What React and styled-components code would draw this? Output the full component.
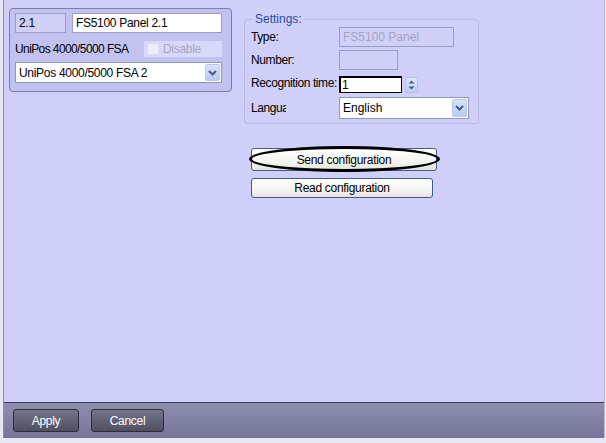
import React from 'react'
import styled, { createGlobalStyle } from 'styled-components'

const GlobalStyle = createGlobalStyle`
  html, body {
    margin: 0;
    padding: 0;
    background: #f4f4f8;
    font-family: "Liberation Sans", Arial, sans-serif;
    font-size: 12px;
    color: #000;
  }
`

const Screen = styled.div`
  width: 606px;
  height: 443px;
  display: flex;
  flex-direction: column;
  background: #e8e8f4;
  overflow: hidden;
`

const Frame = styled.div`
  margin-left: 3px;
  width: 600px;
  height: 438px;
  display: flex;
  flex-direction: column;
  background: #cfcff9;
  border-left: 1px solid #8a8aa6;
  border-right: 1px solid #b8b8d8;
`

const Content = styled.div`
  flex: 1;
  display: flex;
  align-items: flex-start;
  padding: 8px 0 0 5px;
  gap: 12px;
`

const DevicePanel = styled.div`
  box-sizing: border-box;
  width: 223px;
  height: 84px;
  border: 1px solid #7e7ea4;
  border-radius: 4px;
  background: #c2c2f0;
  padding: 4px 9px 0 5px;
  display: flex;
  flex-direction: column;
  letter-spacing: -0.3px;
`

const Row = styled.div`
  display: flex;
  align-items: center;
  gap: ${p => p.$gap || 0}px;
  margin-top: ${p => p.$top || 0}px;
  align-self: ${p => p.$end ? 'end' : 'auto'};
  justify-content: ${p => p.$between ? 'space-between' : 'flex-start'};
`

const PanelLabel = styled.span`
  letter-spacing: -0.6px;
`

const TextBox = styled.div`
  box-sizing: border-box;
  width: ${p => p.$w}px;
  height: ${p => p.$h || 20}px;
  border: 1px solid ${p => p.$focus ? '#000' : '#9c9cc4'};
  border-width: ${p => p.$focus ? '2px 1px 1px 2px' : '1px'};
  background: ${p => p.$disabled ? '#d0d0f6' : '#fff'};
  color: ${p => p.$muted ? '#a4a4c4' : '#000'};
  display: flex;
  align-items: center;
  padding-left: ${p => p.$focus ? 1 : 3}px;
  white-space: nowrap;
`

const DisableBox = styled.div`
  width: 78px;
  height: 16px;
  background: #d8d8fa;
  display: flex;
  align-items: center;
  gap: 4px;
  padding-left: 3px;
  box-sizing: border-box;
  color: #a6a6c6;
`

const Check = styled.span`
  width: 12px;
  height: 12px;
  background: #ececfc;
  border: 1px solid #dcdcf6;
  box-sizing: border-box;
`

const SelectBox = styled.div`
  box-sizing: border-box;
  width: ${p => p.$w}px;
  height: ${p => p.$h || 21}px;
  margin-top: ${p => p.$top || 0}px;
  align-self: ${p => p.$end ? 'end' : 'auto'};
  background: #fff;
  border: 1px solid #8f96c0;
  display: flex;
  align-items: center;
  justify-content: space-between;
  padding: 1px 1px 1px 3px;
`

const ArrowButton = styled.span`
  width: 15px;
  height: 100%;
  box-sizing: border-box;
  border: 1px solid #b9c8ee;
  border-radius: 2px;
  background: linear-gradient(#d7e2fb, #b9cbf3);
  display: flex;
  align-items: center;
  justify-content: center;
`

const SpinButton = styled.span`
  width: 13px;
  height: 16px;
  box-sizing: border-box;
  margin-left: 3px;
  border: 1px solid #b4c2e8;
  background: linear-gradient(#dce5fb, #bccdf3);
  display: flex;
  align-items: center;
  justify-content: center;
`

const RightColumn = styled.div`
  display: flex;
  flex-direction: column;
  width: 235px;
`

const Settings = styled.fieldset`
  margin: 4px 0 0 0;
  padding: 1px 0 4px 6px;
  border: 1px solid #b9b9e2;
  border-radius: 4px;
  width: 235px;
  box-sizing: border-box;
  display: grid;
  grid-template-columns: 88px 1fr;
  grid-template-rows: 20px 20px 20px 23px;
  row-gap: 3px;
  align-items: center;
`

const Legend = styled.legend`
  color: #2a4ea8;
  padding: 0 2px;
  margin-left: 2px;
`

const Label = styled.div`
  white-space: nowrap;
  overflow: hidden;
  width: ${p => p.$w || 88}px;
  letter-spacing: -0.4px;
`

const Buttons = styled.div`
  display: flex;
  flex-direction: column;
  gap: 7px;
  padding: 24px 0 0 7px;
`

const LightButton = styled.button`
  position: relative;
  box-sizing: border-box;
  width: ${p => p.$w}px;
  height: ${p => p.$h}px;
  font-family: inherit;
  font-size: 12px;
  letter-spacing: -0.3px;
  color: #000;
  border: 1px solid #3e5c8c;
  border-radius: 3px;
  background: linear-gradient(#ffffff, #f2f1ec 70%, #e2e1da);
  padding: 0;

  &::after {
    content: '';
    display: ${p => p.$marked ? 'block' : 'none'};
    position: absolute;
    left: -3px;
    right: -4px;
    top: -3px;
    bottom: -2px;
    border: 3px solid #000;
    border-radius: 50%;
  }
`

const BottomBar = styled.div`
  height: 35px;
  border-top: 1px solid #3c3c56;
  background: linear-gradient(#8e8eae, #75759a);
  display: flex;
  align-items: center;
  gap: 12px;
  padding: 0 0 0 9px;
`

const DarkButton = styled.button`
  box-sizing: border-box;
  width: ${p => p.$w}px;
  height: 23px;
  border: 1px solid #2c2c3c;
  border-radius: 3px;
  background: linear-gradient(#74748c, #50505f);
  color: #fff;
  font-family: inherit;
  font-size: 12px;
  letter-spacing: -0.3px;
  padding: 0;
`

const Chevron = () => (
  <svg width="9" height="6" viewBox="0 0 9 6">
    <path d="M1 1 L4.5 4.5 L8 1" stroke="#4a5a86" strokeWidth="2" fill="none" />
  </svg>
)

const UpDown = () => (
  <svg width="7" height="10" viewBox="0 0 7 10">
    <path d="M3.5 0.5 L6.5 3.5 L0.5 3.5 Z M3.5 9.5 L6.5 6.5 L0.5 6.5 Z" fill="#4a5a86" />
  </svg>
)

const App = () => {
  return (
    <Screen>
      <GlobalStyle />
      <Frame>
        <Content>
          <DevicePanel>
            <Row $gap={6}>
              <TextBox $w={51} $disabled>2.1</TextBox>
              <TextBox $w={150}>FS5100 Panel 2.1</TextBox>
            </Row>
            <Row $between $top={8}>
              <PanelLabel>UniPos 4000/5000 FSA</PanelLabel>
              <DisableBox><Check />Disable</DisableBox>
            </Row>
            <SelectBox $w={207} $top={5}>
              <span>UniPos 4000/5000 FSA 2</span>
              <ArrowButton><Chevron /></ArrowButton>
            </SelectBox>
          </DevicePanel>

          <RightColumn>
            <Settings>
              <Legend>Settings:</Legend>
              <Label>Type:</Label>
              <TextBox $w={115} $disabled $muted>FS5100 Panel</TextBox>
              <Label>Number:</Label>
              <TextBox $w={59} $disabled />
              <Label>Recognition time:</Label>
              <Row $end>
                <TextBox $w={63} $h={17} $focus>1</TextBox>
                <SpinButton><UpDown /></SpinButton>
              </Row>
              <Label $w={35}>Language:</Label>
              <SelectBox $w={130} $h={22} $end>
                <span>English</span>
                <ArrowButton><Chevron /></ArrowButton>
              </SelectBox>
            </Settings>

            <Buttons>
              <LightButton $w={186} $h={23} $marked>Send configuration</LightButton>
              <LightButton $w={182} $h={20}>Read configuration</LightButton>
            </Buttons>
          </RightColumn>
        </Content>

        <BottomBar>
          <DarkButton $w={66}>Apply</DarkButton>
          <DarkButton $w={73}>Cancel</DarkButton>
        </BottomBar>
      </Frame>
    </Screen>
  )
}

export default App
